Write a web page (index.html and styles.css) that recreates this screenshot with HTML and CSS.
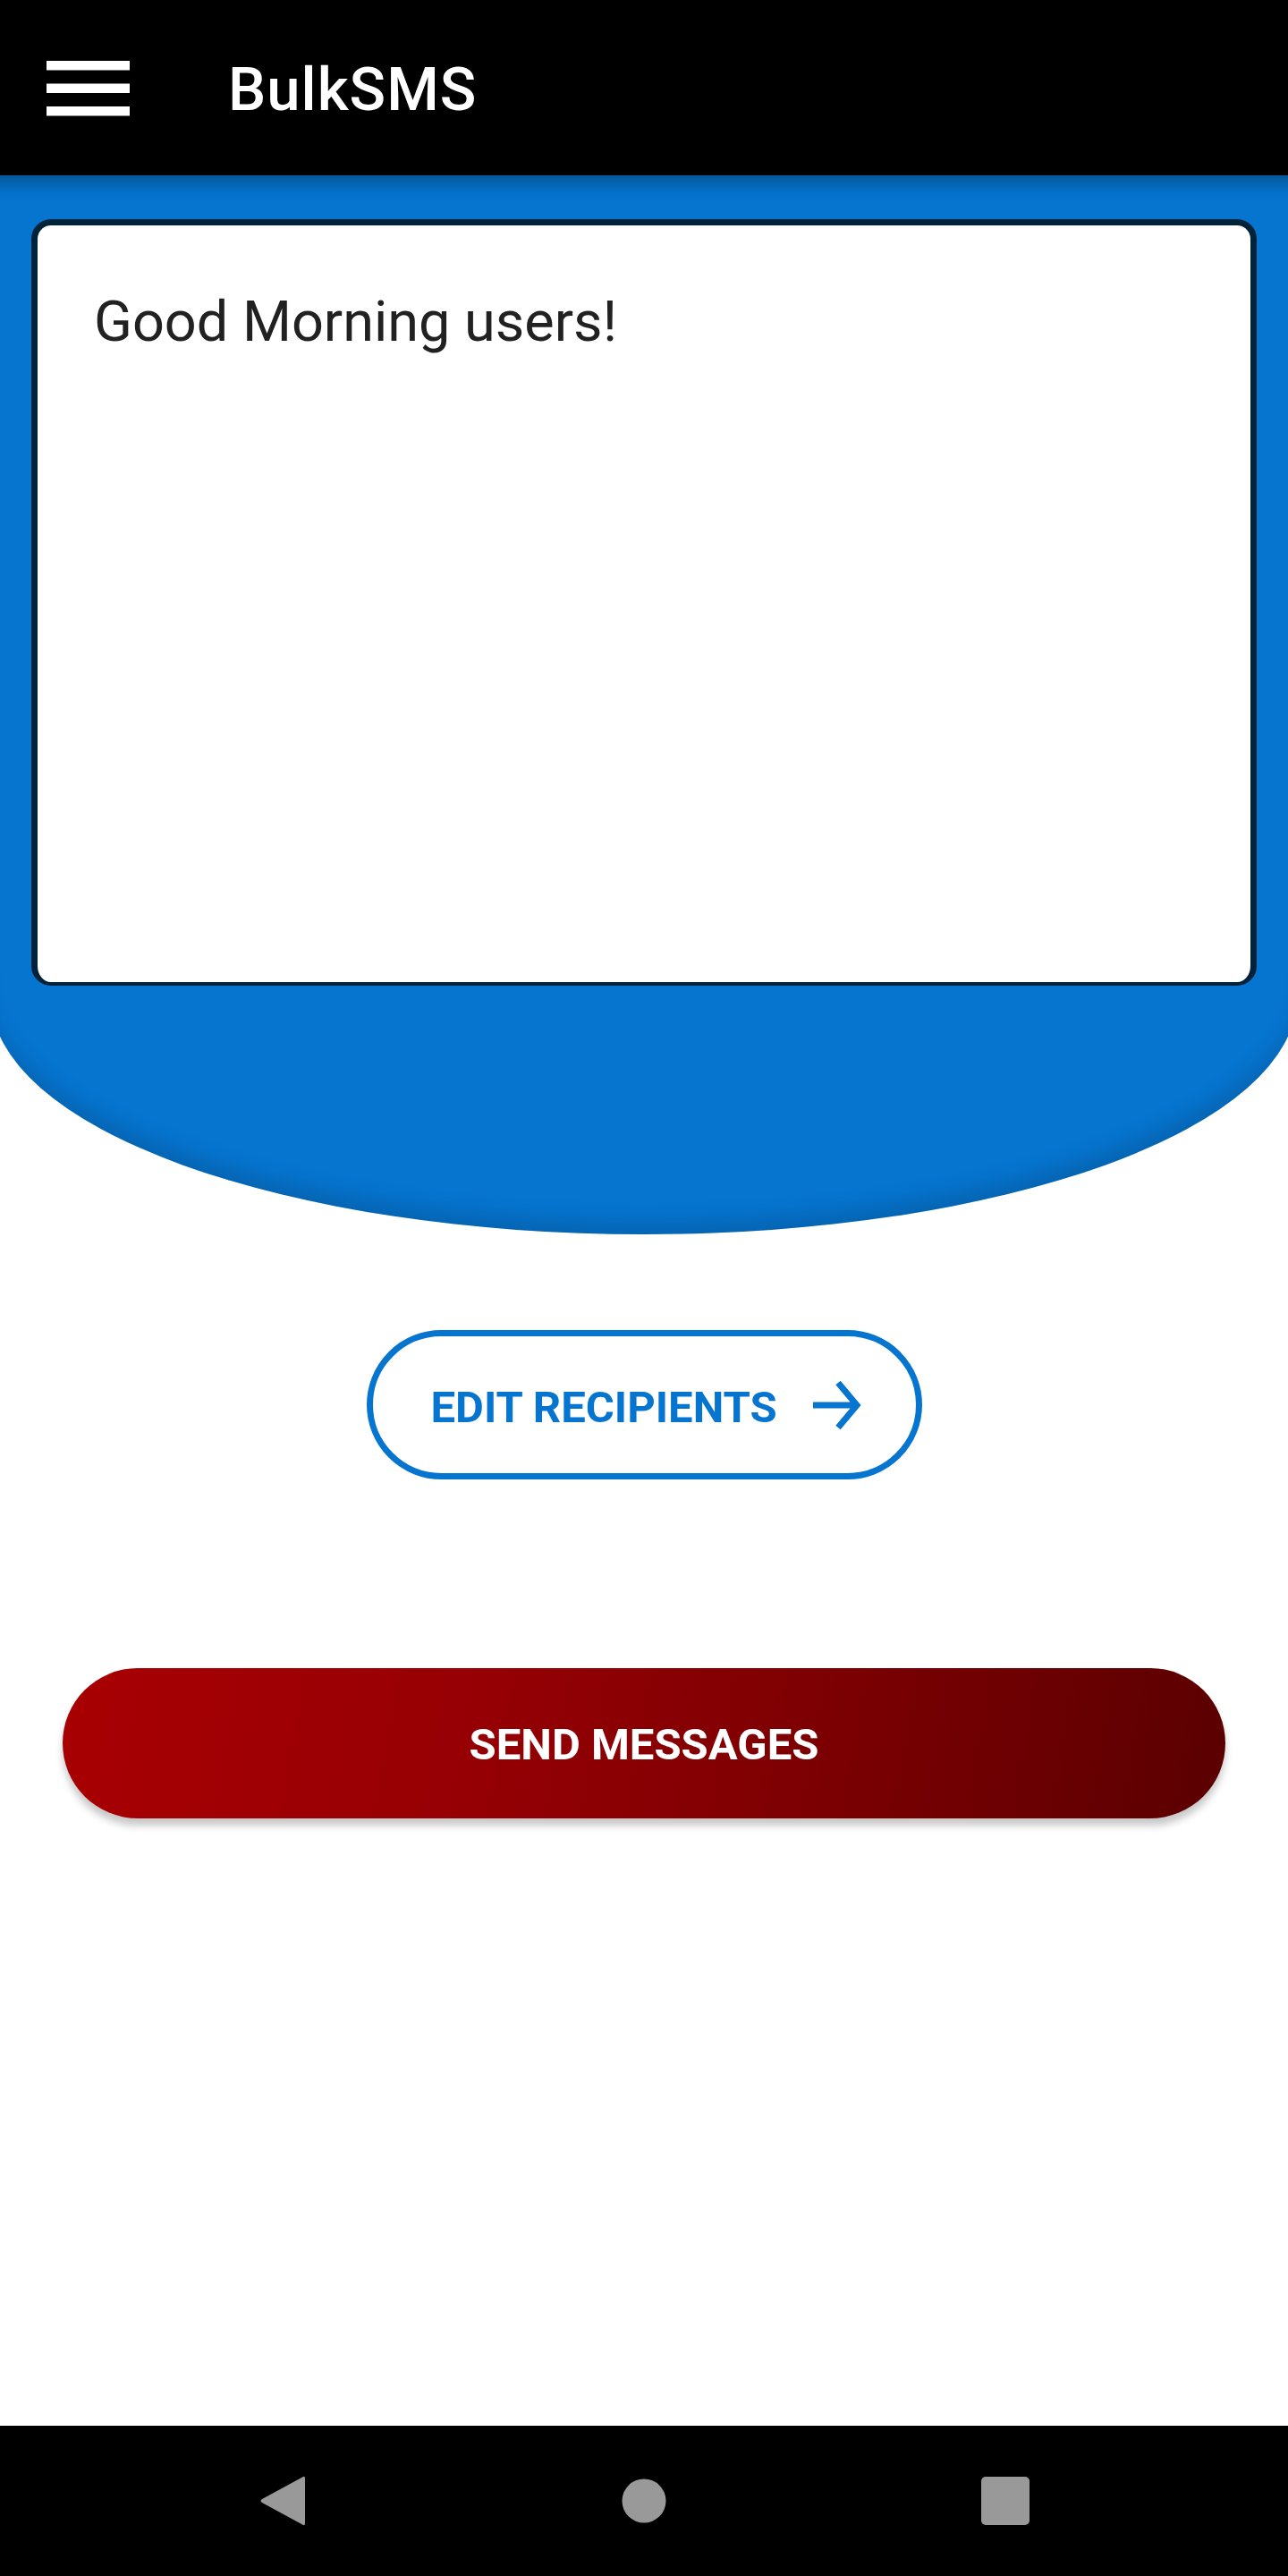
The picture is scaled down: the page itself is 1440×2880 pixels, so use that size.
FILE: index.html
```html
<!DOCTYPE html>
<html lang="en">
<head>
<meta charset="utf-8">
<title>BulkSMS</title>
<link rel="stylesheet" href="styles.css">
</head>
<body>
<div class="app">
  <header class="topbar">
    <svg class="menu" width="93" height="62" viewBox="0 0 93 62" aria-hidden="true">
      <rect x="0" y="0" width="93" height="10.5" fill="#fff"/>
      <rect x="0" y="25.5" width="93" height="10.5" fill="#fff"/>
      <rect x="0" y="51" width="93" height="10.5" fill="#fff"/>
    </svg>
    <h1 class="title">BulkSMS</h1>
  </header>

  <section class="hero">
    <div class="message-box">
      <p class="message-text">Good Morning users!</p>
    </div>
  </section>

  <main class="actions">
    <button class="btn-outline">
      <span class="btn-outline-label">EDIT RECIPIENTS</span>
      <svg class="arrow" width="56" height="56" viewBox="0 0 56 56" aria-hidden="true">
        <path d="M2 28 H51 M30 3 L51 28 L30 53" fill="none" stroke="#0675d0" stroke-width="7"/>
      </svg>
    </button>
    <button class="btn-send">SEND MESSAGES</button>
  </main>

  <nav class="navbar">
    <svg width="52" height="58" viewBox="0 0 52 58" aria-hidden="true">
      <path d="M49 2 Q51 1 51 4 V54 Q51 57 49 56 L3 31 Q0 29 3 27 Z" fill="#999"/>
    </svg>
    <svg width="50" height="50" viewBox="0 0 50 50" aria-hidden="true">
      <circle cx="25" cy="25" r="24.5" fill="#999"/>
    </svg>
    <svg width="54" height="54" viewBox="0 0 54 54" aria-hidden="true">
      <rect x="0" y="0" width="54" height="54" rx="5" fill="#999"/>
    </svg>
  </nav>
</div>
</body>
</html>
```

FILE: styles.css
```css
* { box-sizing: border-box; }

html, body {
  margin: 0;
  padding: 0;
  background: #ffffff;
}

body {
  font-family: Roboto, "Noto Sans", "Liberation Sans", sans-serif;
}

.app {
  width: 1440px;
  height: 2880px;
  display: flex;
  flex-direction: column;
  overflow: hidden;
}

.topbar {
  height: 196px;
  flex: 0 0 196px;
  background: #000;
  display: flex;
  align-items: flex-start;
  padding: 61px 0 0 52px;
}

.menu {
  margin-top: 7px;
  display: block;
}

.title {
  margin: 0 0 0 110px;
  color: #fff;
  font-family: Roboto, sans-serif;
  font-weight: 500;
  font-size: 67px;
  letter-spacing: 1px;
  line-height: 78px;
}

.hero {
  flex: 0 0 1184px;
  height: 1184px;
  width: 1460px;
  margin-left: -10px;
  background: #0675d0;
  border-radius: 0 0 730px 730px / 0 0 265px 265px;
  padding: 49px 45px 0 45px;
  box-shadow:
    inset 0 22px 18px -12px rgba(0, 0, 0, 0.28),
    inset 0 -26px 26px -14px rgba(0, 0, 0, 0.16);
}

.message-box {
  height: 857px;
  background: #fff;
  border: 7px solid #00233a;
  border-bottom-width: 4px;
  border-radius: 22px;
  padding: 71px 60px 0 63px;
}

.message-text {
  margin: 0;
  font-family: Roboto, sans-serif;
  font-size: 63px;
  line-height: 74px;
  color: #212121;
}

.actions {
  flex: 1 1 auto;
  display: flex;
  flex-direction: column;
  align-items: center;
  padding-top: 107px;
}

.btn-outline {
  width: 621px;
  height: 167px;
  border: 7px solid #0675d0;
  border-radius: 84px;
  background: #fff;
  display: flex;
  align-items: center;
  justify-content: flex-start;
  padding: 6px 0 0 65px;
  font: inherit;
}

.btn-outline-label {
  font-family: Roboto, sans-serif;
  font-weight: 700;
  font-size: 49px;
  color: #0675d0;
  line-height: 58px;
}

.arrow {
  display: block;
  margin-left: 38px;
  margin-top: -6px;
}

.btn-send {
  margin-top: 211px;
  width: 1300px;
  height: 168px;
  border: none;
  border-radius: 84px;
  background: linear-gradient(100deg, #a80003 0%, #960004 35%, #7c0002 65%, #5a0001 100%);
  box-shadow: 0 8px 9px rgba(0, 0, 0, 0.22);
  color: #fff;
  font-family: Roboto, sans-serif;
  font-weight: 700;
  font-size: 49px;
  line-height: 58px;
  padding-top: 4px;
}

.navbar {
  flex: 0 0 168px;
  height: 168px;
  background: #000;
  display: grid;
  grid-template-columns: repeat(3, 56px);
  justify-content: center;
  column-gap: 348px;
  align-items: center;
  justify-items: center;
}

.navbar svg {
  display: block;
}
```
